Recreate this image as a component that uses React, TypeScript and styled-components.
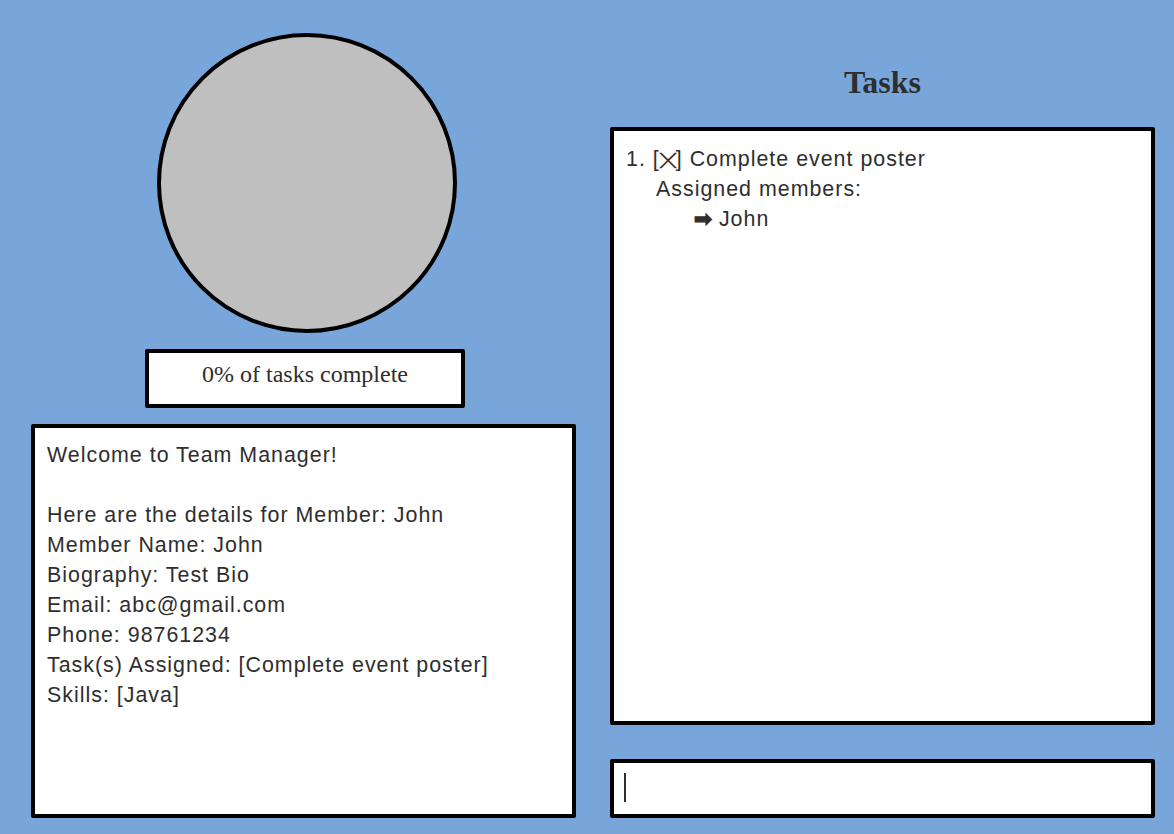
import React from 'react'
import styled, { createGlobalStyle } from 'styled-components'

const GlobalStyle = createGlobalStyle`
  html, body {
    margin: 0;
    padding: 0;
    background-color: #78a6db;
  }
  * {
    box-sizing: border-box;
  }
`

const details = [
  'Welcome to Team Manager!',
  '',
  'Here are the details for Member: John',
  'Member Name: John',
  'Biography: Test Bio',
  'Email: abc@gmail.com',
  'Phone: 98761234',
  'Task(s) Assigned: [Complete event poster]',
  'Skills: [Java]',
]

const tasks = [
  { title: 'Complete event poster', done: true, members: ['John'] },
]

export default function App() {
  return (
    <>
      <GlobalStyle />
      <Page>
        <LeftColumn>
          <Avatar />
          <ProgressBox>0% of tasks complete</ProgressBox>
          <Panel>
            {details.map((line, i) => (
              <Line key={i}>{line || '\u00a0'}</Line>
            ))}
          </Panel>
        </LeftColumn>
        <RightColumn>
          <Title>Tasks</Title>
          <TaskPanel>
            {tasks.map((task, i) => (
              <div key={i}>
                <Line>
                  {i + 1}. [<Cross>╳</Cross>] {task.title}
                </Line>
                <Line indent={30}>Assigned members:</Line>
                {task.members.map(m => (
                  <Line key={m} indent={68}>
                    <Arrow>➡</Arrow> {m}
                  </Line>
                ))}
              </div>
            ))}
          </TaskPanel>
          <CommandBox>
            <Caret />
          </CommandBox>
        </RightColumn>
      </Page>
    </>
  )
}

const Page = styled.div`
  display: grid;
  grid-template-columns: 545px 545px;
  column-gap: 34px;
  height: 834px;
  padding: 0 19px 16px 31px;
  color: #2e2e2e;
  font-family: 'Liberation Sans', Arial, sans-serif;
`

const LeftColumn = styled.div`
  display: flex;
  flex-direction: column;
  align-items: center;
  gap: 16px;
  padding-top: 33px;
  min-height: 0;
`

const Avatar = styled.div`
  width: 300px;
  height: 300px;
  flex-shrink: 0;
  margin-left: 7px;
  border: 4px solid #000;
  border-radius: 50%;
  background-color: #bfbfbf;
`

const ProgressBox = styled.div`
  width: 320px;
  height: 59px;
  flex-shrink: 0;
  margin-left: 3px;
  display: flex;
  align-items: center;
  justify-content: center;
  border: 4px solid #000;
  border-radius: 2px;
  background-color: white;
  font-family: 'Liberation Serif', 'Times New Roman', serif;
  font-size: 24px;
  padding-bottom: 8px;
`

const Panel = styled.div`
  align-self: stretch;
  flex: 1;
  border: 4px solid #000;
  border-radius: 2px;
  background-color: white;
  padding: 12px;
`

const TaskPanel = styled(Panel)`
  margin-bottom: 34px;
  padding-top: 13px;
`

const Line = styled.div<{ indent?: number }>`
  font-size: 21.4px;
  letter-spacing: 1px;
  line-height: 30px;
  height: 30px;
  white-space: pre;
  padding-left: ${p => p.indent || 0}px;
`

const Cross = styled.span`
  display: inline-block;
  width: 16px;
  line-height: 13px;
  font-family: 'DejaVu Sans', sans-serif;
  font-size: 13px;
  letter-spacing: 0;
  text-align: center;
  transform: scale(2, 1.02) translateY(-1px);
`

const Arrow = styled.span`
  font-family: 'DejaVu Sans', sans-serif;
  letter-spacing: 0;
  -webkit-text-stroke: 1.3px #2e2e2e;
`

const RightColumn = styled.div`
  display: flex;
  flex-direction: column;
  padding-top: 64px;
  min-height: 0;
`

const Title = styled.h1`
  margin: 0 0 27px;
  text-align: center;
  font-family: 'Liberation Serif', 'Times New Roman', serif;
  font-size: 32px;
  font-weight: bold;
  line-height: 36px;
  color: #2e2e2e;
`

const CommandBox = styled.div`
  height: 59px;
  flex-shrink: 0;
  border: 4px solid #000;
  border-radius: 2px;
  background-color: white;
  padding: 10px;
`

const Caret = styled.div`
  width: 2px;
  height: 29px;
  background-color: #2e2e2e;
`
